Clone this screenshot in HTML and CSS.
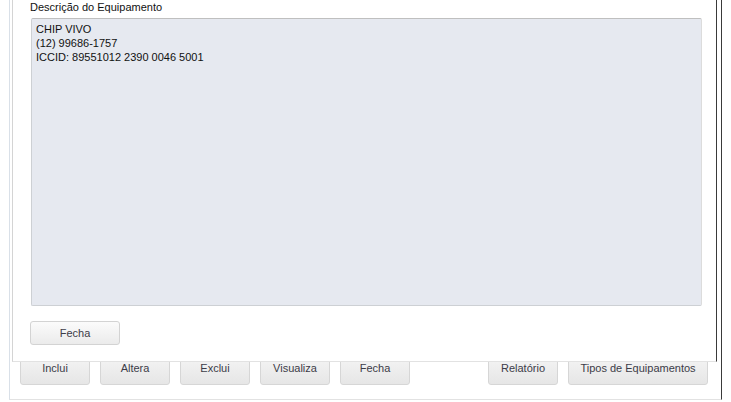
FILE: index.html
```html
<!DOCTYPE html>
<html lang="pt">
<head>
<meta charset="utf-8">
<title>Equipamento</title>
<link rel="stylesheet" href="styles.css">
</head>
<body>
<div class="page">
  <div class="actions">
    <div class="group">
      <button class="btn">Inclui</button>
      <button class="btn">Altera</button>
      <button class="btn">Exclui</button>
      <button class="btn">Visualiza</button>
      <button class="btn">Fecha</button>
    </div>
    <div class="group">
      <button class="btn">Relatório</button>
      <button class="btn wide">Tipos de Equipamentos</button>
    </div>
  </div>
</div>
<div class="dialog">
  <div class="label">Descrição do Equipamento</div>
  <div class="memo">CHIP VIVO
(12) 99686-1757
ICCID: 89551012 2390 0046 5001</div>
  <div class="dialog-actions">
    <button class="dbtn">Fecha</button>
  </div>
</div>
</body>
</html>
```
FILE: styles.css
```css
html, body {
  margin: 0;
  padding: 0;
  background: #ffffff;
  font-family: "Liberation Sans", Arial, sans-serif;
  font-size: 11px;
  color: #111;
}

.page {
  box-sizing: border-box;
  margin-left: 9px;
  width: 713px;
  height: 400px;
  border-left: 1px solid #d9e0e8;
  border-right: 1px solid #3a3a3a;
  border-bottom: 1px solid #e2e2e2;
  padding: 350px 13px 0 10px;
}

.actions {
  display: flex;
  justify-content: space-between;
}

.group {
  display: flex;
  gap: 10px;
}

.btn {
  box-sizing: border-box;
  width: 70px;
  height: 35px;
  padding: 0;
  border: 1px solid #d6d6d6;
  border-radius: 3px;
  background: linear-gradient(#f7f7f7, #e6e6e6);
  font-family: "Liberation Sans", Arial, sans-serif;
  font-size: 11px;
  color: #3c3c48;
}

.btn.wide {
  width: 140px;
}

.dialog {
  position: absolute;
  top: 0;
  left: 12px;
  box-sizing: border-box;
  width: 705px;
  height: 362px;
  background: #ffffff;
  border-left: 1px solid #d4d4d4;
  border-right: 1px solid #3a3a3a;
  border-bottom: 1px solid #e2e2e2;
  padding: 0 14px 0 17px;
  display: flex;
  flex-direction: column;
}

.label {
  line-height: 14px;
  height: 14px;
  color: #111;
}

.memo {
  box-sizing: border-box;
  margin: 4px 0 0 1px;
  width: 671px;
  height: 288px;
  padding: 3px 4px;
  background: #e6e9f0;
  border: 1px solid #cdd0d4;
  border-top-color: #bfbfbf;
  border-right-color: #dcdcdc;
  border-radius: 2px;
  white-space: pre-line;
  line-height: 14px;
  color: #111;
}

.dialog-actions {
  margin-top: 15px;
  display: flex;
}

.dbtn {
  box-sizing: border-box;
  width: 90px;
  height: 24px;
  padding: 0;
  border: 1px solid #d3d3d3;
  border-radius: 3px;
  background: linear-gradient(#fbfbfb, #ebebeb);
  font-family: "Liberation Sans", Arial, sans-serif;
  font-size: 11px;
  color: #3c3c48;
}
```
